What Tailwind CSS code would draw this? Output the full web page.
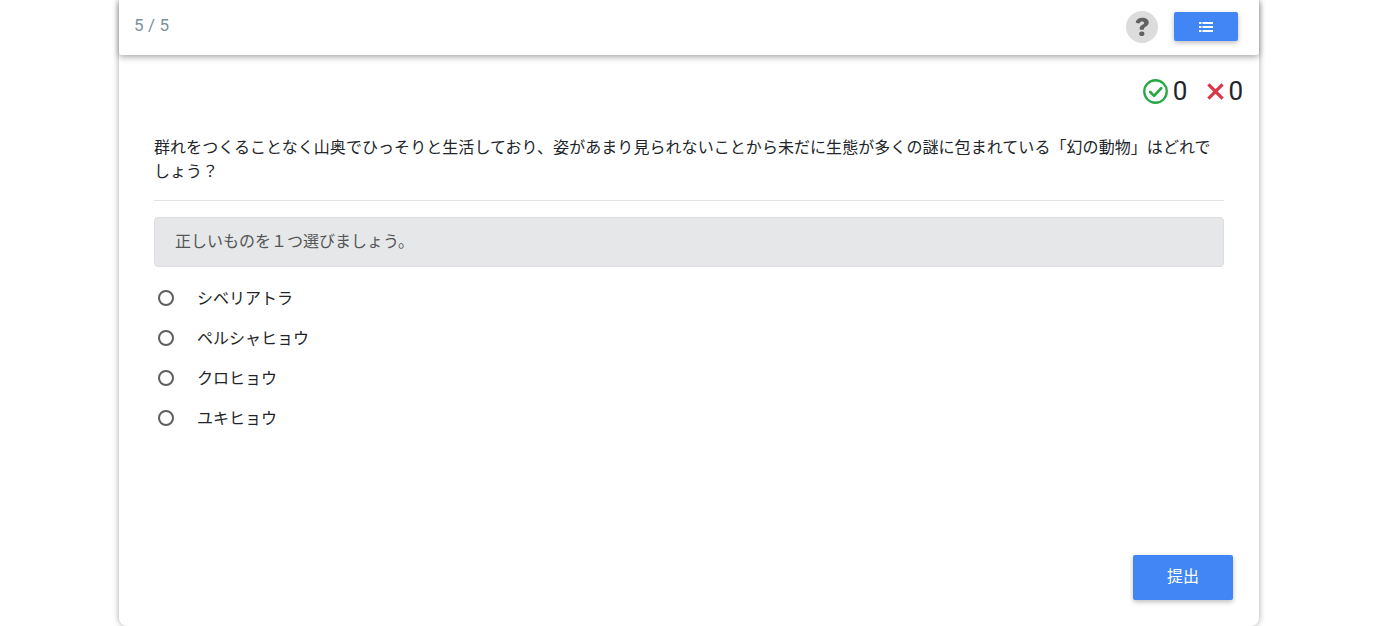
<!DOCTYPE html>
<html lang="ja">
<head>
  <meta charset="UTF-8" />
  <title>クイズ</title>
  <script src="https://cdn.jsdelivr.net/npm/@tailwindcss/browser@4"></script>
</head>
<body class="bg-white h-[626px] overflow-hidden font-['Roboto','Noto_Sans_CJK_JP',sans-serif]">
  <div class="w-[1140px] ml-[119px] h-[626px] bg-white rounded-b-[8px] shadow-[0_0_6px_rgba(0,0,0,0.35)] flex flex-col">

    <!-- header -->
    <div class="h-[55px] shrink-0 flex items-center justify-between pl-[15px] pr-[21px] pb-[2px] bg-white rounded-b-[3px] shadow-[0_2px_6px_rgba(0,0,0,0.35)]">
      <span class="text-[17px] tracking-[0.1px] text-[#78909c] mt-[-1px]">5 / 5</span>
      <div class="flex items-center gap-[16px]">
        <div class="w-[32px] h-[32px] rounded-full bg-[#dcdcdc] flex items-center justify-center text-[#616161]">
          <svg width="14" height="20" viewBox="0 0 15 24" fill="currentColor" preserveAspectRatio="none"><path d="M7.900 1C3.900 1 1.600 3 .8 5.900c-.1.4.1.8.5.9l2.800.9c.4.1.7-.1.9-.4.5-1.200 1.200-2 2.600-2 1.300 0 2.200.8 2.200 1.800 0 1-.8 1.500-2 2.300-1.500 1-2.800 2.100-2.800 4.400v.7c0 .4.300.7.700.7h3.200c.4 0 .7-.3.700-.7v-.4c0-1 .6-1.500 1.800-2.300 1.700-1.100 3.300-2.500 3.300-5.100C14.700 3.300 11.800 1 7.900 1zM7.300 17.300a2.800 2.800 0 1 0 0 5.600 2.800 2.800 0 0 0 0-5.600z"/></svg>
        </div>
        <button class="w-[64px] h-[29px] rounded-[2px] bg-[#4285f4] flex items-center justify-center shadow-[0_2px_5px_rgba(0,0,0,0.26)]">
          <svg width="14" height="12" viewBox="0 0 14 12" fill="#fff"><rect x="0" y="1" width="2.500" height="2"/><rect x="0" y="5" width="2.500" height="2"/><rect x="0" y="9" width="2.500" height="2"/><rect x="3.500" y="1" width="10.500" height="2"/><rect x="3.500" y="5" width="10.500" height="2"/><rect x="3.500" y="9" width="10.500" height="2"/></svg>
        </button>
      </div>
    </div>

    <!-- score -->
    <div class="flex items-center justify-end pr-[16px] pt-[20px] h-[52px] shrink-0 text-[26px] leading-none text-[#212529]">
      <svg width="25" height="25" viewBox="0 0 26 26" fill="none" class="mr-[5px]"><circle cx="13" cy="13" r="11.700" stroke="#28a745" stroke-width="2.400"/><path d="M7.500 13.500l4 4 7.500-8" stroke="#28a745" stroke-width="2.800" stroke-linecap="round" stroke-linejoin="round"/></svg>
      <span>0</span>
      <svg width="17" height="17" viewBox="0 0 18 18" fill="none" class="ml-[20px] mr-[4px]"><path d="M1.500 1.500l15 15M16.500 1.500l-15 15" stroke="#dc3545" stroke-width="3.400"/></svg>
      <span>0</span>
    </div>

    <!-- question -->
    <div class="px-[35px] flex-1 flex flex-col">
      <p class="mt-[29px] text-[16px] leading-[24px] tracking-[0.06px] text-[#212529] pb-[16px] border-b border-[#e3e3e3]">群れをつくることなく山奥でひっそりと生活しており、姿があまり見られないことから未だに生態が多くの謎に包まれている「幻の動物」はどれでしょう？</p>

      <div class="mt-[16px] h-[50px] flex items-center px-[20px] bg-[#e6e7e9] border border-[#dcdde0] rounded-[4px] text-[16px] text-[#555]">正しいものを１つ選びましょう。</div>

      <div class="mt-[11px] flex flex-col text-[16px] text-[#212529]">
        <label class="h-[40px] flex items-center gap-[23px] pl-[4px]"><span class="w-[16px] h-[16px] rounded-full border-2 border-[#5f5f5f]"></span><span class="mt-[2px]">シベリアトラ</span></label>
        <label class="h-[40px] flex items-center gap-[23px] pl-[4px]"><span class="w-[16px] h-[16px] rounded-full border-2 border-[#5f5f5f]"></span><span class="mt-[2px]">ペルシャヒョウ</span></label>
        <label class="h-[40px] flex items-center gap-[23px] pl-[4px]"><span class="w-[16px] h-[16px] rounded-full border-2 border-[#5f5f5f]"></span><span class="mt-[2px]">クロヒョウ</span></label>
        <label class="h-[40px] flex items-center gap-[23px] pl-[4px]"><span class="w-[16px] h-[16px] rounded-full border-2 border-[#5f5f5f]"></span><span class="mt-[2px]">ユキヒョウ</span></label>
      </div>

      <div class="mt-auto mb-[26px] flex justify-end">
        <button class="w-[100px] h-[45px] mr-[-9px] pb-[2px] rounded-[2px] bg-[#4285f4] text-white text-[16px] shadow-[0_2px_5px_rgba(0,0,0,0.26)]">提出</button>
      </div>
    </div>
  </div>
</body>
</html>
